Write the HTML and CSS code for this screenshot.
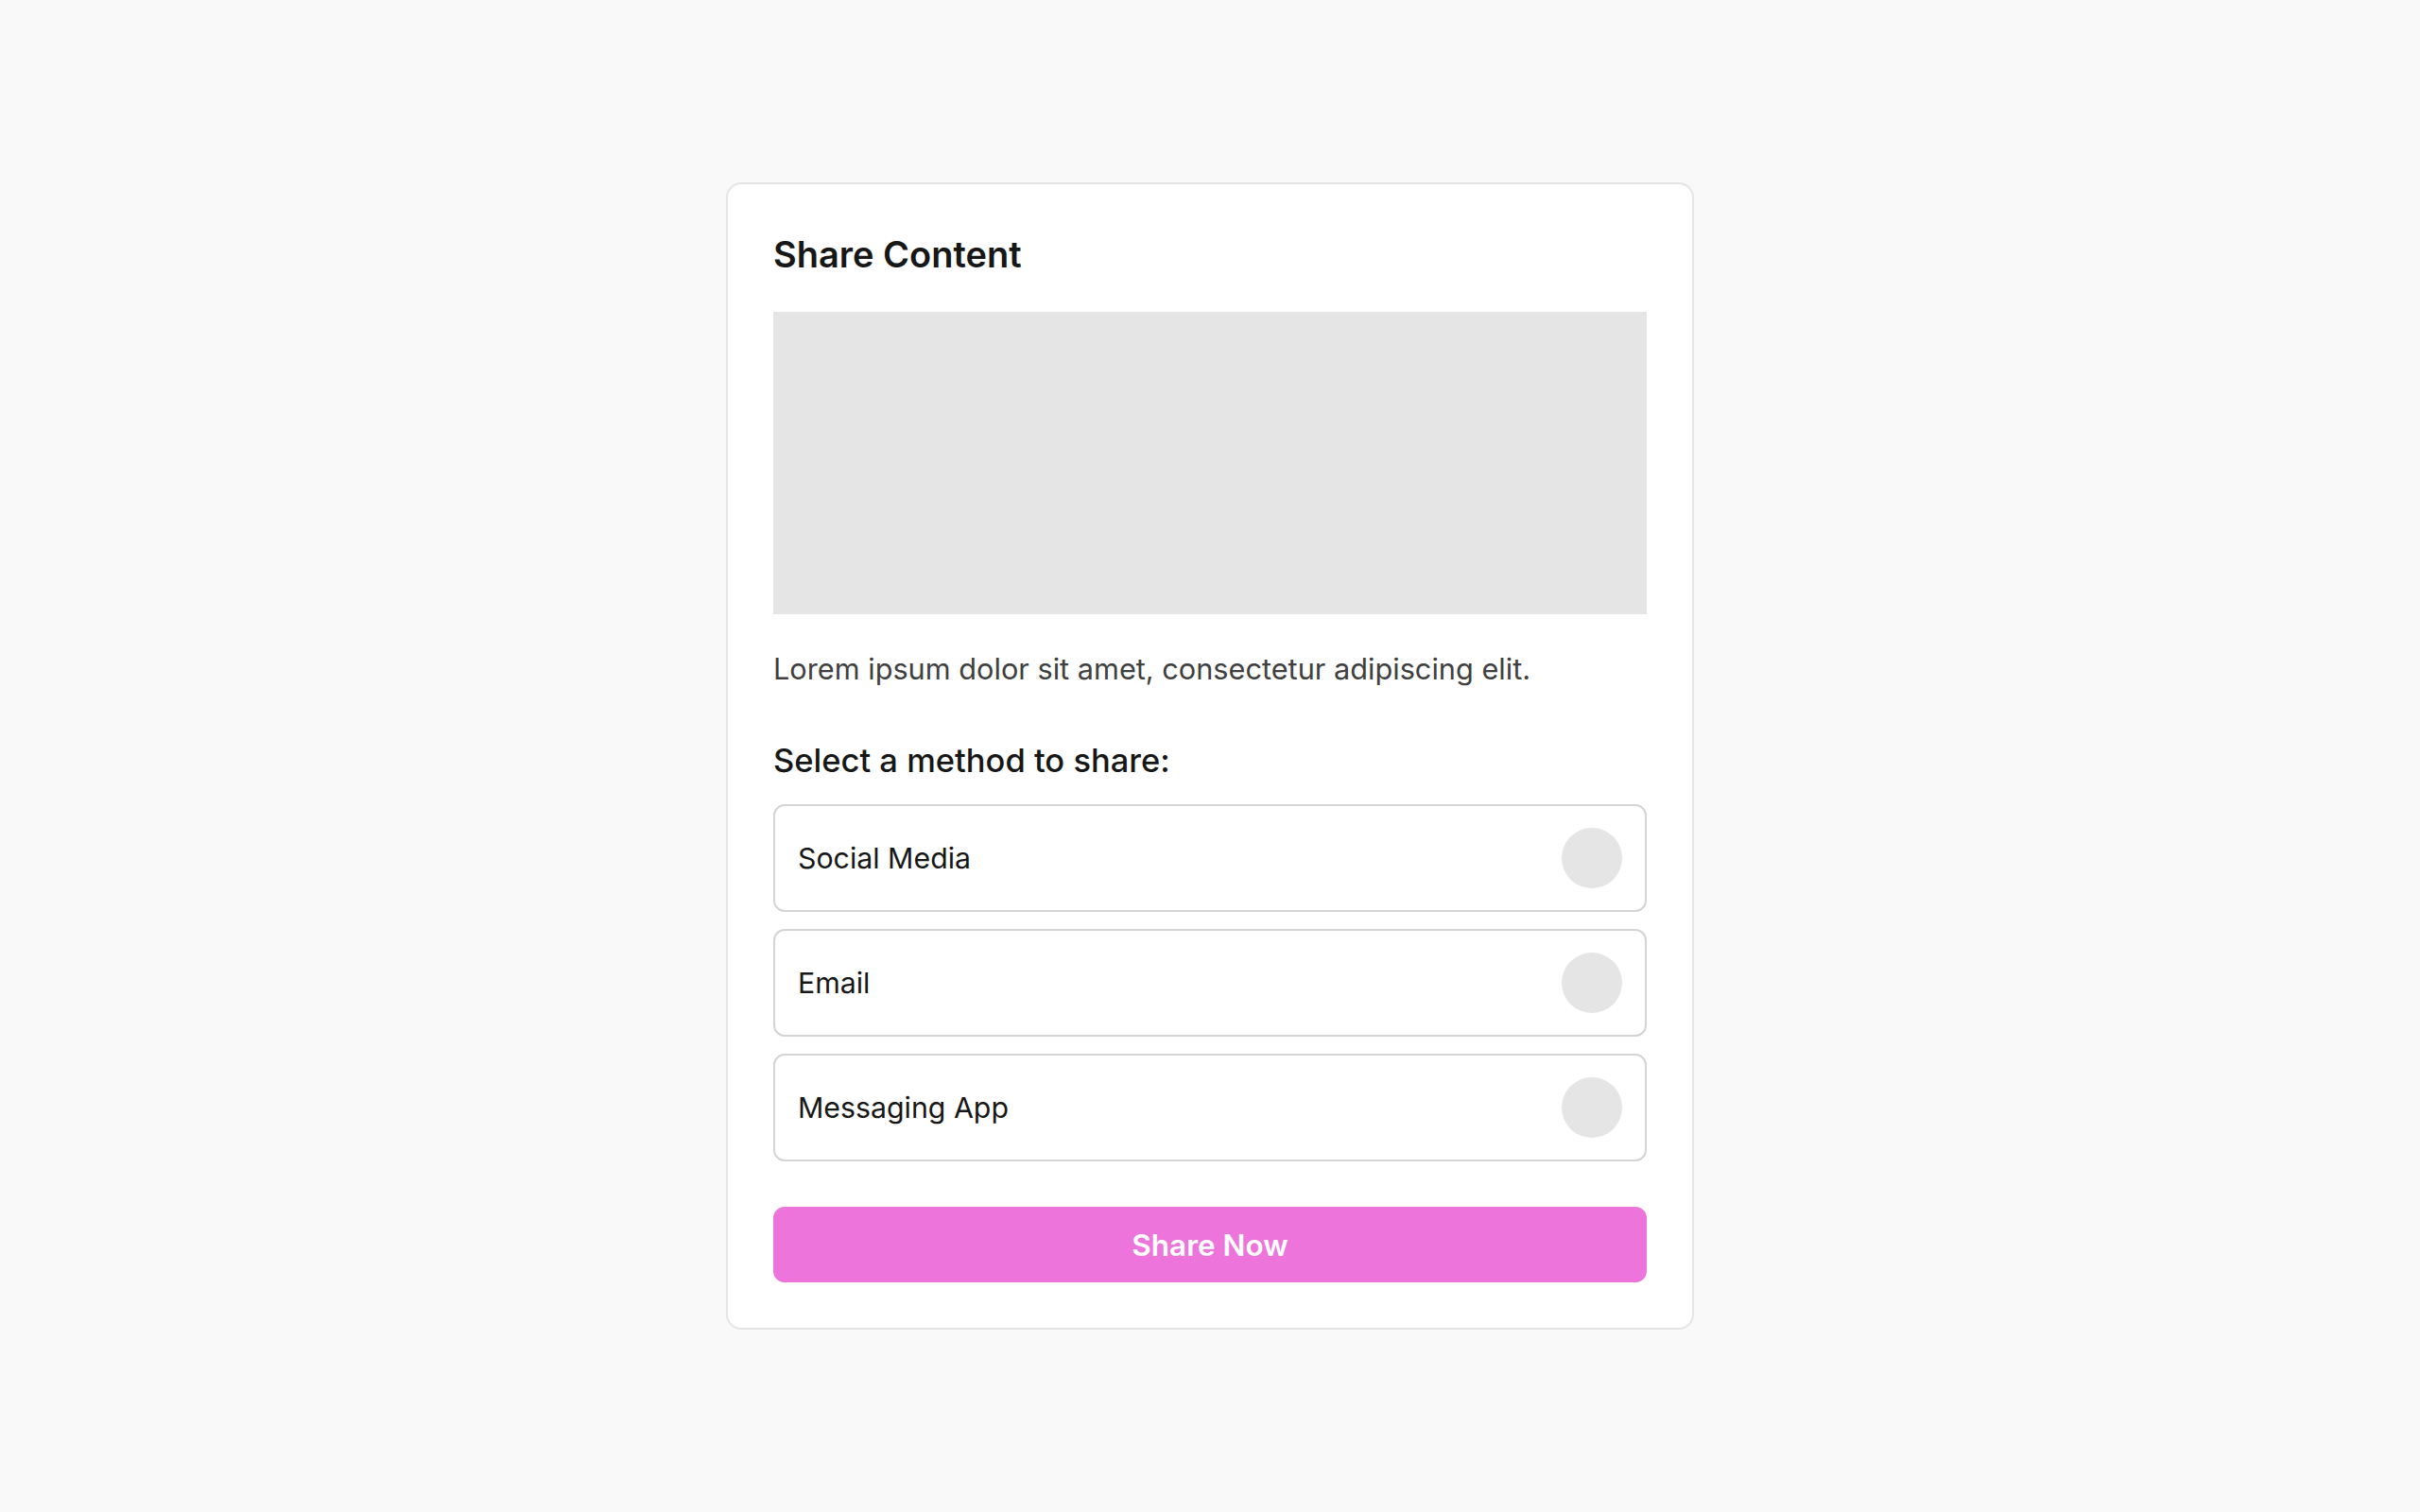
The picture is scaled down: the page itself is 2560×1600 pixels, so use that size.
FILE: index.html
```html
<!DOCTYPE html>
<html lang="en">

<head>
    <meta charset="UTF-8">
    <meta name="viewport" content="width=device-width, initial-scale=1.0">
    <title>Share Content</title>
    <link rel="stylesheet" href="styles.css">
</head>

<body>
    <div class="share-card">
        <h2 class="share-title">Share Content</h2>
        <div class="preview"></div>
        <p class="description">Lorem ipsum dolor sit amet, consectetur adipiscing elit.</p>

        <h3 class="method-label">Select a method to share:</h3>
        <div class="method-list">
            <div class="method">
                <span>Social Media</span>
                <span class="method-icon"></span>
            </div>
            <div class="method">
                <span>Email</span>
                <span class="method-icon"></span>
            </div>
            <div class="method">
                <span>Messaging App</span>
                <span class="method-icon"></span>
            </div>
        </div>

        <button class="share-button">Share Now</button>
    </div>
</body>

</html>
```

FILE: styles.css
```css
* {
    box-sizing: border-box;
}

body {
    margin: 0;
    min-height: 100vh;
    display: flex;
    align-items: center;
    justify-content: center;
    background-color: #f9f9f9;
    font-family: Inter, "Liberation Sans", sans-serif;
    color: #171717;
}

.share-card {
    width: 1024px;
    background-color: #fff;
    border: 2px solid #e5e5e5;
    border-radius: 16px;
    padding: 48px;
}

.share-title {
    margin: 0 0 35px 0;
    font-size: 38px;
    font-weight: 600;
    line-height: 52px;
}

.preview {
    height: 320px;
    background-color: #e5e5e5;
}

.description {
    margin: 36px 0 0 0;
    font-size: 30.7px;
    line-height: 43px;
    color: #404040;
}

.method-label {
    margin: 52px 0 22px 0;
    font-size: 34.5px;
    font-weight: 500;
    line-height: 48px;
}

.method-list {
    display: flex;
    flex-direction: column;
    gap: 18px;
}

.method {
    display: flex;
    align-items: center;
    justify-content: space-between;
    padding: 23px 24px;
    border: 2px solid #d4d4d4;
    border-radius: 12px;
    font-size: 30.3px;
}

.method-icon {
    width: 64px;
    height: 64px;
    border-radius: 50%;
    background-color: #e5e5e5;
}

.share-button {
    display: block;
    width: 100%;
    height: 80px;
    margin-top: 48px;
    border: none;
    border-radius: 12px;
    background-color: #ec74db;
    color: #fff;
    font-family: inherit;
    font-size: 31.5px;
    font-weight: 600;
}
```
